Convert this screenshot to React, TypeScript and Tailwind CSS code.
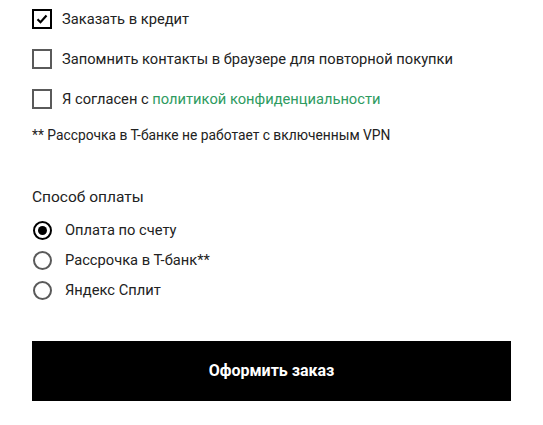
import React, { useState } from "react";

const Checkbox = ({ checked }: { checked: boolean }) => (
  <span
    className={
      "flex h-5 w-5 shrink-0 items-center justify-center border-2 " +
      (checked ? "border-black" : "border-[#5a5a5a]")
    }
  >
    {checked && (
      <svg width="12" height="10" viewBox="0 0 12 10">
        <path d="M1.5 5.2 L4.5 8.2 L10.5 1.5" fill="none" stroke="#000" strokeWidth="2.2" />
      </svg>
    )}
  </span>
);

const Radio = ({ checked }: { checked: boolean }) => (
  <span
    className={
      "flex h-[19px] w-[19px] shrink-0 items-center justify-center rounded-full border-2 " +
      (checked ? "border-black" : "border-[#5a5a5a]")
    }
  >
    {checked && <span className="h-[9px] w-[9px] rounded-full bg-black" />}
  </span>
);

const App = () => {
  const [payment, setPayment] = useState(0);
  const methods = ["Оплата по счету", "Рассрочка в Т-банк**", "Яндекс Сплит"];

  return (
    <div className="min-h-[425px] bg-white px-8 pt-[9px] text-[#222] [font-family:Roboto,'Liberation_Sans',sans-serif]">
      <div className="flex flex-col gap-5">
        <label className="flex h-5 items-center gap-[10px] text-[14.7px]">
          <Checkbox checked={true} />
          <span>Заказать в кредит</span>
        </label>
        <label className="flex h-5 items-center gap-[10px] text-[14.7px]">
          <Checkbox checked={false} />
          <span>Запомнить контакты в браузере для повторной покупки</span>
        </label>
        <label className="flex h-5 items-center gap-[10px] text-[14.7px]">
          <Checkbox checked={false} />
          <span>
            Я согласен с <a className="text-[#2e9b5f]">политикой конфиденциальности</a>
          </span>
        </label>
      </div>

      <p className="mt-4 text-[13.8px] leading-5">** Рассрочка в Т-банке не работает с включенным VPN</p>

      <h3 className="mt-10 text-[15.5px] leading-6">Способ оплаты</h3>

      <div className="mt-[6px] flex flex-col">
        {methods.map((m, i) => (
          <label
            key={m}
            className="flex h-[30px] items-center gap-[13px] pl-px text-[14.7px]"
            onClick={() => setPayment(i)}
          >
            <Radio checked={payment === i} />
            <span>{m}</span>
          </label>
        ))}
      </div>

      <button className="mt-[36px] flex h-[60px] w-full items-center justify-center bg-black text-base font-bold text-white">
        Оформить заказ
      </button>
    </div>
  );
};

export default App;
